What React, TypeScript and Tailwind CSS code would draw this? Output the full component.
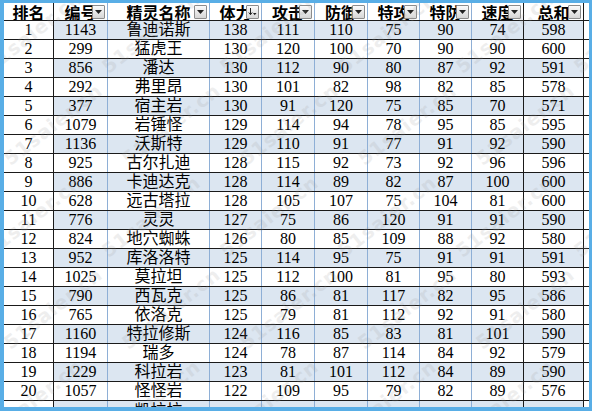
import React from "react";

type Row = [number, string, string, string, string, string, string, string, string, string];

const rows: Row[] = [
  [1, "1143", "鲁迪诺斯", "138", "111", "110", "75", "90", "74", "598"],
  [2, "299", "猛虎王", "130", "120", "100", "70", "90", "90", "600"],
  [3, "856", "潘达", "130", "112", "90", "80", "87", "92", "591"],
  [4, "292", "弗里昂", "130", "101", "82", "98", "82", "85", "578"],
  [5, "377", "宿主岩", "130", "91", "120", "75", "85", "70", "571"],
  [6, "1079", "岩锤怪", "129", "114", "94", "78", "95", "85", "595"],
  [7, "1136", "沃斯特", "129", "110", "91", "77", "91", "92", "590"],
  [8, "925", "古尔扎迪", "128", "115", "92", "73", "92", "96", "596"],
  [9, "886", "卡迪达克", "128", "114", "89", "82", "87", "100", "600"],
  [10, "628", "远古塔拉", "128", "105", "107", "75", "104", "81", "600"],
  [11, "776", "灵灵", "127", "75", "86", "120", "91", "91", "590"],
  [12, "824", "地穴蜘蛛", "126", "80", "85", "109", "88", "92", "580"],
  [13, "952", "库洛洛特", "125", "114", "95", "75", "91", "91", "591"],
  [14, "1025", "莫拉坦", "125", "112", "100", "81", "95", "80", "593"],
  [15, "790", "西瓦克", "125", "86", "81", "117", "82", "95", "586"],
  [16, "765", "依洛克", "125", "79", "81", "112", "92", "91", "580"],
  [17, "1160", "特拉修斯", "124", "116", "85", "83", "81", "101", "590"],
  [18, "1194", "瑞多", "124", "78", "87", "114", "84", "92", "579"],
  [19, "1229", "科拉岩", "123", "81", "101", "112", "84", "89", "590"],
  [20, "1057", "怪怪岩", "122", "109", "95", "79", "82", "89", "576"],
];

// widths include the right border of each cell
const widths = [
  "w-[50px]",
  "w-[54px]",
  "w-[102px]",
  "w-[52px]",
  "w-[53px]",
  "w-[53px]",
  "w-[52px]",
  "w-[52px]",
  "w-[52px]",
  "w-[60px]",
];

const rightBorders = [
  "border-r-[#1a1a1a]",
  "border-r-[#8eafd6]",
  "border-r-[#8eafd6]",
  "border-r-[#8eafd6]",
  "border-r-[#8eafd6]",
  "border-r-[#8eafd6]",
  "border-r-[#8eafd6]",
  "border-r-[#8eafd6]",
  "border-r-[#1a1a1a]",
  "border-r-[#1a1a1a]",
];

const headers = ["排名", "编号", "精灵名称", "体力", "攻击", "防御", "特攻", "特防", "速度", "总和"];

function DropButton({ sorted }: { sorted?: boolean }) {
  return (
    <div className="absolute right-[2px] top-[2px] flex h-[14px] w-[13px] items-center justify-center rounded-[1px] border border-[#8c8c8c] bg-gradient-to-b from-[#fbfbfb] to-[#d6d6d6]">
      {sorted ? (
        <svg width="9" height="10" viewBox="0 0 9 10">
          <path d="M2.5 1v6.5M0.8 5.5l1.7 2.2 1.7-2.2" stroke="#222" strokeWidth="1" fill="none" />
          <path d="M5 6h3.5L6.75 8.3z" fill="#222" />
        </svg>
      ) : (
        <svg width="7" height="4" viewBox="0 0 7 4">
          <path d="M0 0h7L3.5 4z" fill="#222" />
        </svg>
      )}
    </div>
  );
}

function Watermarks() {
  const marks: { top: number; left: number }[] = [];
  for (let r = 0; r < 6; r++) {
    for (let c = 0; c < 6; c++) {
      marks.push({ top: r * 92 + 20, left: c * 118 - 30 + (r % 2) * 20 });
    }
  }
  return (
    <div className="pointer-events-none absolute inset-0 overflow-hidden">
      {marks.map((m, i) => (
        <span
          key={i}
          className="absolute -rotate-[38deg] whitespace-nowrap font-['DejaVu_Sans',sans-serif] text-[19px] font-bold tracking-[1px] text-[#9a9a9a] opacity-[0.16]"
          style={{ top: m.top, left: m.left }}
        >
          51saier.cn
        </span>
      ))}
    </div>
  );
}

export default function App() {
  return (
    <div className="relative box-border h-[411px] w-[592px] overflow-hidden border-b-[4px] border-l-4 border-r-[3px] border-t-[3px] border-[#59aee6] bg-white font-['Liberation_Serif','Noto_Sans_CJK_SC',serif] text-[16px] leading-none text-black">
      {/* header */}
      <div className="flex h-[18px] border-b border-b-[#1a1a1a] bg-white">
        {headers.map((h, i) => (
          <div
            key={h}
            className={`relative flex h-full shrink-0 items-center justify-center overflow-hidden border-r font-['Noto_Sans_CJK_SC',sans-serif] font-bold ${widths[i]} ${rightBorders[i]}`}
          >
            <span className="leading-none">{h}</span>
            {i > 0 && <DropButton sorted={i === 3} />}
          </div>
        ))}
        <div className="flex-1" />
      </div>

      {/* body */}
      {rows.map((row, r) => {
        const band = r % 2 === 0 ? "bg-[#dce6f1]" : "bg-white";
        return (
          <div key={row[0]} className="flex h-[19px] border-b border-b-[#1a1a1a]">
            {row.map((v, i) => (
              <div
                key={i}
                className={`flex h-full shrink-0 items-center justify-center overflow-hidden whitespace-nowrap border-r ${widths[i]} ${rightBorders[i]} ${i === 0 ? "bg-white" : band}`}
              >
                {v}
              </div>
            ))}
            <div className="flex-1 bg-white" />
          </div>
        );
      })}

      {/* partially visible row 21 */}
      <div className="flex h-[19px]">
        {widths.map((w, i) => (
          <div
            key={i}
            className={`flex h-full shrink-0 items-start justify-center overflow-hidden border-r pt-[2px] ${w} ${rightBorders[i]} ${i === 0 ? "bg-white" : "bg-[#dce6f1]"}`}
          >
            {i === 2 ? "凯拉拉" : ""}
          </div>
        ))}
        <div className="flex-1 bg-white" />
      </div>

      <Watermarks />
    </div>
  );
}
